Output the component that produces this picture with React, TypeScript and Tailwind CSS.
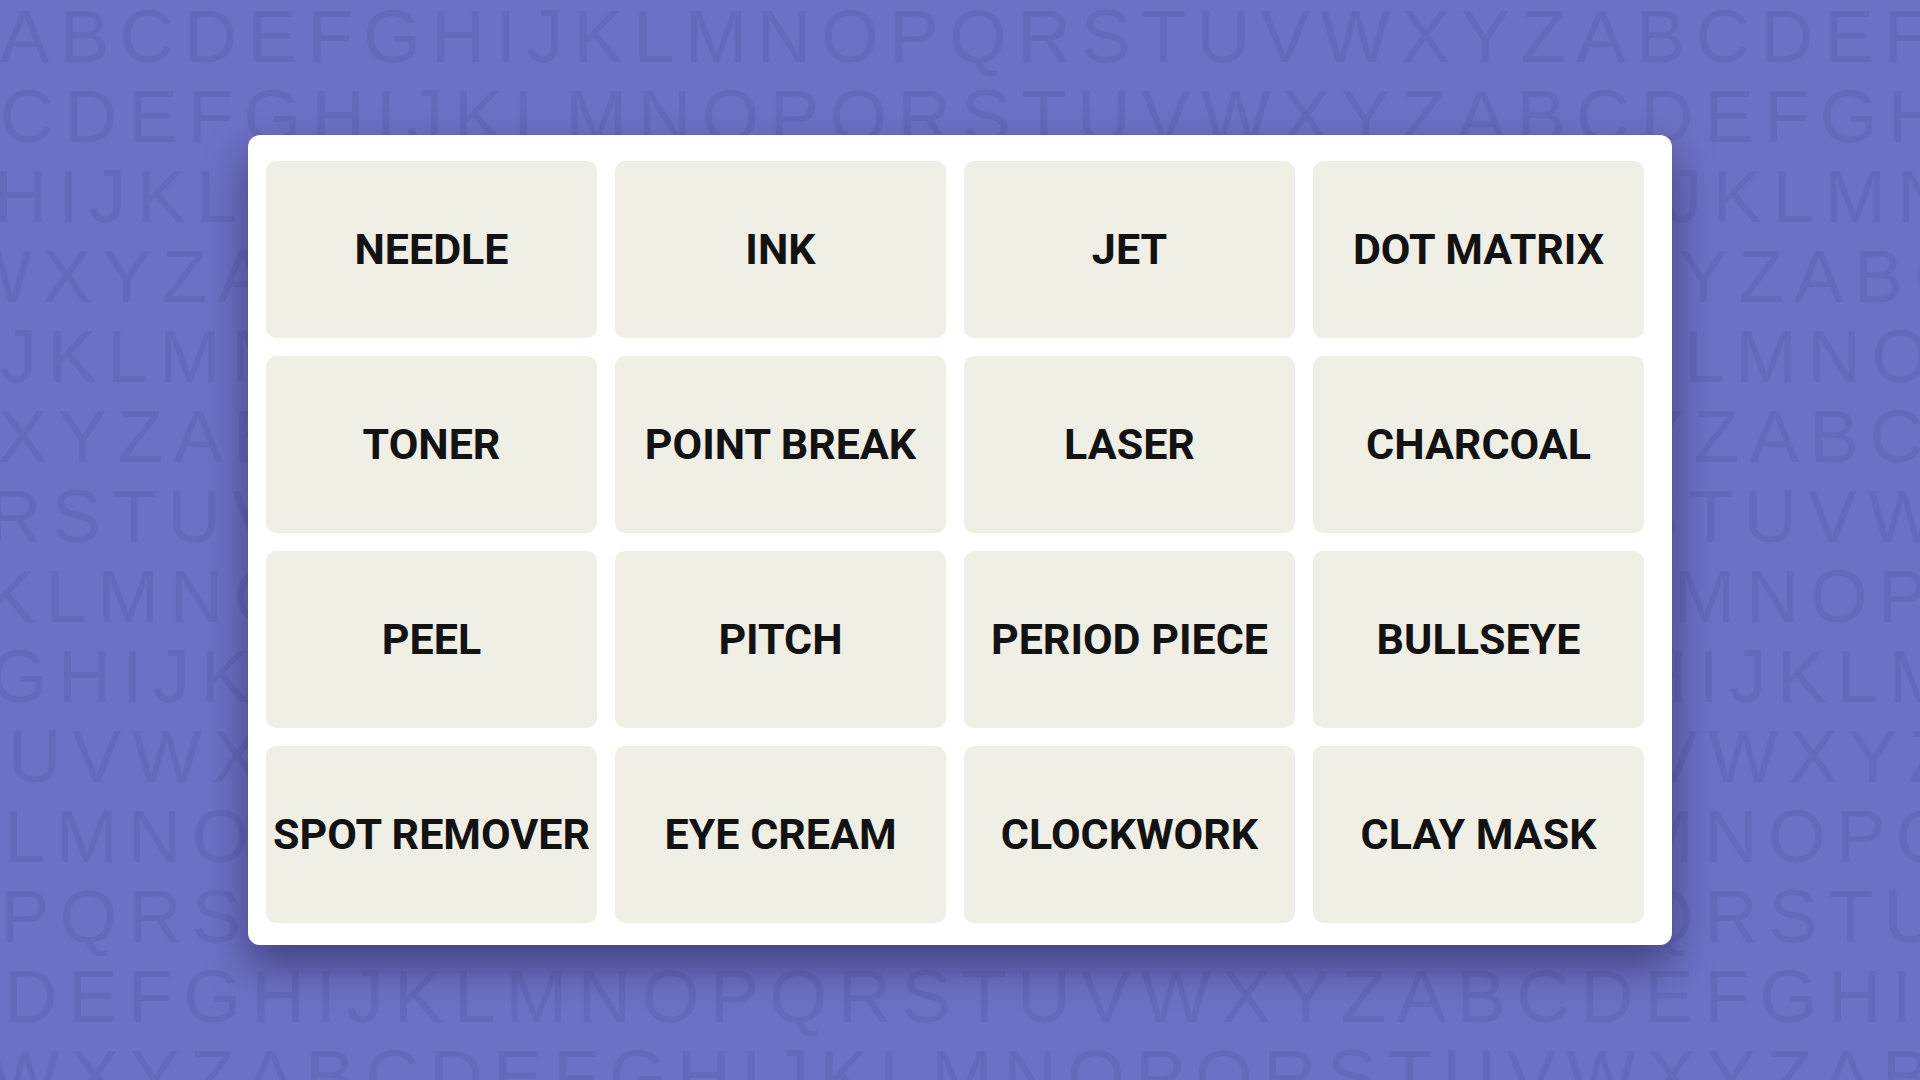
import React from "react";

const WORDS = [
  "NEEDLE",
  "INK",
  "JET",
  "DOT MATRIX",
  "TONER",
  "POINT BREAK",
  "LASER",
  "CHARCOAL",
  "PEEL",
  "PITCH",
  "PERIOD PIECE",
  "BULLSEYE",
  "SPOT REMOVER",
  "EYE CREAM",
  "CLOCKWORK",
  "CLAY MASK",
];

const ALPHABET = "ABCDEFGHIJKLMNOPQRSTUVWXYZ";

// start letter + how far the row is pushed left/right
const ROWS: { start: string; offset: string }[] = [
  { start: "A", offset: "ml-0" },
  { start: "C", offset: "ml-0" },
  { start: "H", offset: "-ml-[6px]" },
  { start: "W", offset: "-ml-[38px]" },
  { start: "J", offset: "ml-0" },
  { start: "X", offset: "-ml-[2px]" },
  { start: "R", offset: "-ml-[12px]" },
  { start: "K", offset: "-ml-[14px]" },
  { start: "G", offset: "-ml-[10px]" },
  { start: "U", offset: "ml-[8px]" },
  { start: "L", offset: "ml-[4px]" },
  { start: "P", offset: "ml-0" },
  { start: "D", offset: "ml-[4px]" },
  { start: "W", offset: "-ml-[10px]" },
];

const rowText = (start: string) => {
  const i = ALPHABET.indexOf(start);
  let out = "";
  for (let k = 0; k < 34; k++) {
    out += ALPHABET[(i + k) % 26];
  }
  return out;
};

const LetterBackdrop = () => (
  <div className="absolute inset-0 overflow-hidden pointer-events-none select-none" aria-hidden="true">
    <div className="-mt-[3px] flex flex-col">
      {ROWS.map((row, idx) => (
        <div
          key={idx}
          className={`${row.offset} whitespace-nowrap text-[74px] leading-[80px] tracking-[10.5px] text-[#6469ba] font-['Liberation_Sans',Arial,sans-serif]`}
        >
          {rowText(row.start)}
        </div>
      ))}
    </div>
  </div>
);

const Tile = ({ word }: { word: string }) => (
  <div className="h-[177px] rounded-[10px] bg-[#efefe6] flex items-center justify-center">
    <span className="text-[43px] font-bold text-[#121212] whitespace-nowrap font-['Roboto','Liberation_Sans',sans-serif]">
      {word}
    </span>
  </div>
);

export default function App() {
  return (
    <div className="relative w-full h-[1080px] overflow-hidden bg-[#6c71c4]">
      <LetterBackdrop />
      <div className="relative h-full flex items-center justify-center">
        <div className="w-[1424px] bg-white rounded-xl pl-[18px] pr-[28px] pt-[26px] pb-[22px] shadow-[0_20px_40px_rgba(20,20,60,0.5)]">
          <div className="grid grid-cols-4 gap-[18px]">
            {WORDS.map((w) => (
              <Tile key={w} word={w} />
            ))}
          </div>
        </div>
      </div>
    </div>
  );
}
